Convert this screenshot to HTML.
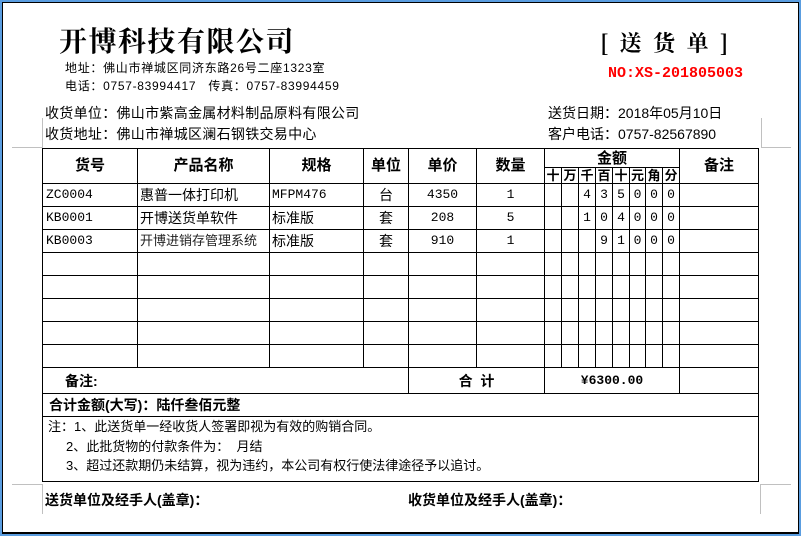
<!DOCTYPE html>
<html><head><meta charset="utf-8"><style>
*{margin:0;padding:0;box-sizing:border-box}
body{width:801px;height:536px;position:relative;background:#fff;overflow:hidden;font-family:"Liberation Sans","Noto Sans CJK SC",sans-serif;color:#000}
.frame{position:absolute;left:0;top:0;width:801px;height:536px;border:2px solid #5a9de0}
.inner{position:absolute;left:2px;top:2px;right:2px;bottom:2px;border:1px solid #000;border-bottom-width:2px}
.a{position:absolute;white-space:nowrap}
.g{position:absolute;background:#c0c0c0}
table{position:absolute;left:42px;top:148px;border-collapse:collapse;table-layout:fixed;font-size:14px}
td{border:1px solid #000;padding:0;overflow:hidden;white-space:nowrap;line-height:16px}
.h{font-weight:bold;text-align:center;font-size:15px}
.c{text-align:center}
.m{font-family:"Liberation Mono",monospace;font-size:13px}
.d td{height:23px}
.dg{text-align:center;font-family:"Liberation Mono",monospace;font-size:13px}
.sm{font-size:13px;font-weight:bold;text-align:center;line-height:14px}
</style></head><body>
<div class="frame"></div><div class="inner"></div>

<div class="a" style="left:59px;top:23px;font-family:'Noto Serif CJK SC',serif;font-weight:bold;font-size:28px;letter-spacing:1.5px;line-height:34px">开博科技有限公司</div>
<div class="a" style="left:65px;top:60px;font-size:12px;line-height:16px;letter-spacing:0.7px">地址：佛山市禅城区同济东路26号二座1323室</div>
<div class="a" style="left:65px;top:78px;font-size:12px;line-height:16px;letter-spacing:0.7px">电话：0757-83994417&nbsp;&nbsp;&nbsp;传真：0757-83994459</div>
<div class="a" style="left:600px;top:29px;font-size:22px;line-height:28px;font-family:'Noto Serif CJK SC',serif;font-weight:bold;letter-spacing:3px">[ 送 货 单 ]</div>
<div class="a" style="left:608px;top:65px;font-size:15px;font-weight:bold;color:#f00;font-family:'Liberation Mono',monospace;line-height:18px">NO:XS-201805003</div>

<div class="a" style="left:45px;top:104px;font-size:14px;line-height:18px;letter-spacing:0.3px">收货单位：佛山市紫高金属材料制品原料有限公司</div>
<div class="a" style="left:45px;top:125px;font-size:14px;line-height:18px;letter-spacing:0.3px">收货地址：佛山市禅城区澜石钢铁交易中心</div>
<div class="a" style="left:548px;top:104px;font-size:14px;line-height:18px">送货日期：2018年05月10日</div>
<div class="a" style="left:548px;top:125px;font-size:14px;line-height:18px">客户电话：0757-82567890</div>

<div class="g" style="left:42px;top:118px;width:1px;height:30px"></div>
<div class="g" style="left:12px;top:147px;width:30px;height:1px"></div>
<div class="g" style="left:761px;top:118px;width:1px;height:30px"></div>
<div class="g" style="left:761px;top:147px;width:30px;height:1px"></div>
<div class="g" style="left:12px;top:484px;width:30px;height:1px"></div>
<div class="g" style="left:42px;top:484px;width:1px;height:30px"></div>
<div class="g" style="left:760px;top:484px;width:31px;height:1px"></div>
<div class="g" style="left:760px;top:484px;width:1px;height:30px"></div>

<table style="width:716px">
<colgroup><col style="width:95px"><col style="width:132px"><col style="width:94px"><col style="width:45px"><col style="width:68px"><col style="width:68px"><col style="width:17px"><col style="width:17px"><col style="width:17px"><col style="width:17px"><col style="width:17px"><col style="width:16px"><col style="width:17px"><col style="width:17px"><col style="width:79px"></colgroup>
<tr style="height:19px"><td class="h" rowspan="2">货号</td><td class="h" rowspan="2">产品名称</td><td class="h" rowspan="2">规格</td><td class="h" rowspan="2">单位</td><td class="h" rowspan="2">单价</td><td class="h" rowspan="2">数量</td><td class="h" colspan="8" style="height:19px;line-height:17px">金额</td><td class="h" rowspan="2">备注</td></tr>
<tr style="height:16px"><td class="sm" style="height:16px">十</td><td class="sm">万</td><td class="sm">千</td><td class="sm">百</td><td class="sm">十</td><td class="sm">元</td><td class="sm">角</td><td class="sm">分</td></tr>
<tr class="d"><td class="m" style="padding-left:3px">ZC0004</td><td style="padding-left:2px">惠普一体打印机</td><td class="m" style="padding-left:2px">MFPM476</td><td class="c">台</td><td class="c m">4350</td><td class="c m">1</td><td></td><td></td><td class="dg">4</td><td class="dg">3</td><td class="dg">5</td><td class="dg">0</td><td class="dg">0</td><td class="dg">0</td><td></td></tr>
<tr class="d"><td class="m" style="padding-left:3px">KB0001</td><td style="padding-left:2px">开博送货单软件</td><td style="padding-left:2px">标准版</td><td class="c">套</td><td class="c m">208</td><td class="c m">5</td><td></td><td></td><td class="dg">1</td><td class="dg">0</td><td class="dg">4</td><td class="dg">0</td><td class="dg">0</td><td class="dg">0</td><td></td></tr>
<tr class="d"><td class="m" style="padding-left:3px">KB0003</td><td style="padding-left:2px;font-size:13px;color:#222">开博进销存管理系统</td><td style="padding-left:2px">标准版</td><td class="c">套</td><td class="c m">910</td><td class="c m">1</td><td></td><td></td><td></td><td class="dg">9</td><td class="dg">1</td><td class="dg">0</td><td class="dg">0</td><td class="dg">0</td><td></td></tr>
<tr class="d"><td></td><td></td><td></td><td></td><td></td><td></td><td></td><td></td><td></td><td></td><td></td><td></td><td></td><td></td><td></td></tr>
<tr class="d"><td></td><td></td><td></td><td></td><td></td><td></td><td></td><td></td><td></td><td></td><td></td><td></td><td></td><td></td><td></td></tr>
<tr class="d"><td></td><td></td><td></td><td></td><td></td><td></td><td></td><td></td><td></td><td></td><td></td><td></td><td></td><td></td><td></td></tr>
<tr class="d"><td></td><td></td><td></td><td></td><td></td><td></td><td></td><td></td><td></td><td></td><td></td><td></td><td></td><td></td><td></td></tr>
<tr class="d"><td></td><td></td><td></td><td></td><td></td><td></td><td></td><td></td><td></td><td></td><td></td><td></td><td></td><td></td><td></td></tr>
<tr style="height:26px"><td colspan="4" style="font-weight:bold;padding-left:22px">备注:</td><td colspan="2" class="c" style="font-weight:bold">合&nbsp;&nbsp;计</td><td colspan="8" class="c m" style="font-weight:bold">¥6300.00</td><td></td></tr>
<tr style="height:23px"><td colspan="15" style="font-weight:bold;padding-left:6px">合计金额(大写)：陆仟叁佰元整</td></tr>
<tr style="height:65px"><td colspan="15" style="vertical-align:top;font-size:13px;line-height:19.5px;padding-left:5px;padding-top:0px">注：1、此送货单一经收货人签署即视为有效的购销合同。<br>&nbsp;&nbsp;&nbsp;&nbsp;&nbsp;2、此批货物的付款条件为：&nbsp;&nbsp;月结<br>&nbsp;&nbsp;&nbsp;&nbsp;&nbsp;3、超过还款期仍未结算，视为违约，本公司有权行使法律途径予以追讨。</td></tr>
</table>

<div class="a" style="left:45px;top:491px;font-size:14px;font-weight:bold;line-height:18px">送货单位及经手人(盖章)：</div>
<div class="a" style="left:408px;top:491px;font-size:14px;font-weight:bold;line-height:18px">收货单位及经手人(盖章)：</div>
</body></html>
